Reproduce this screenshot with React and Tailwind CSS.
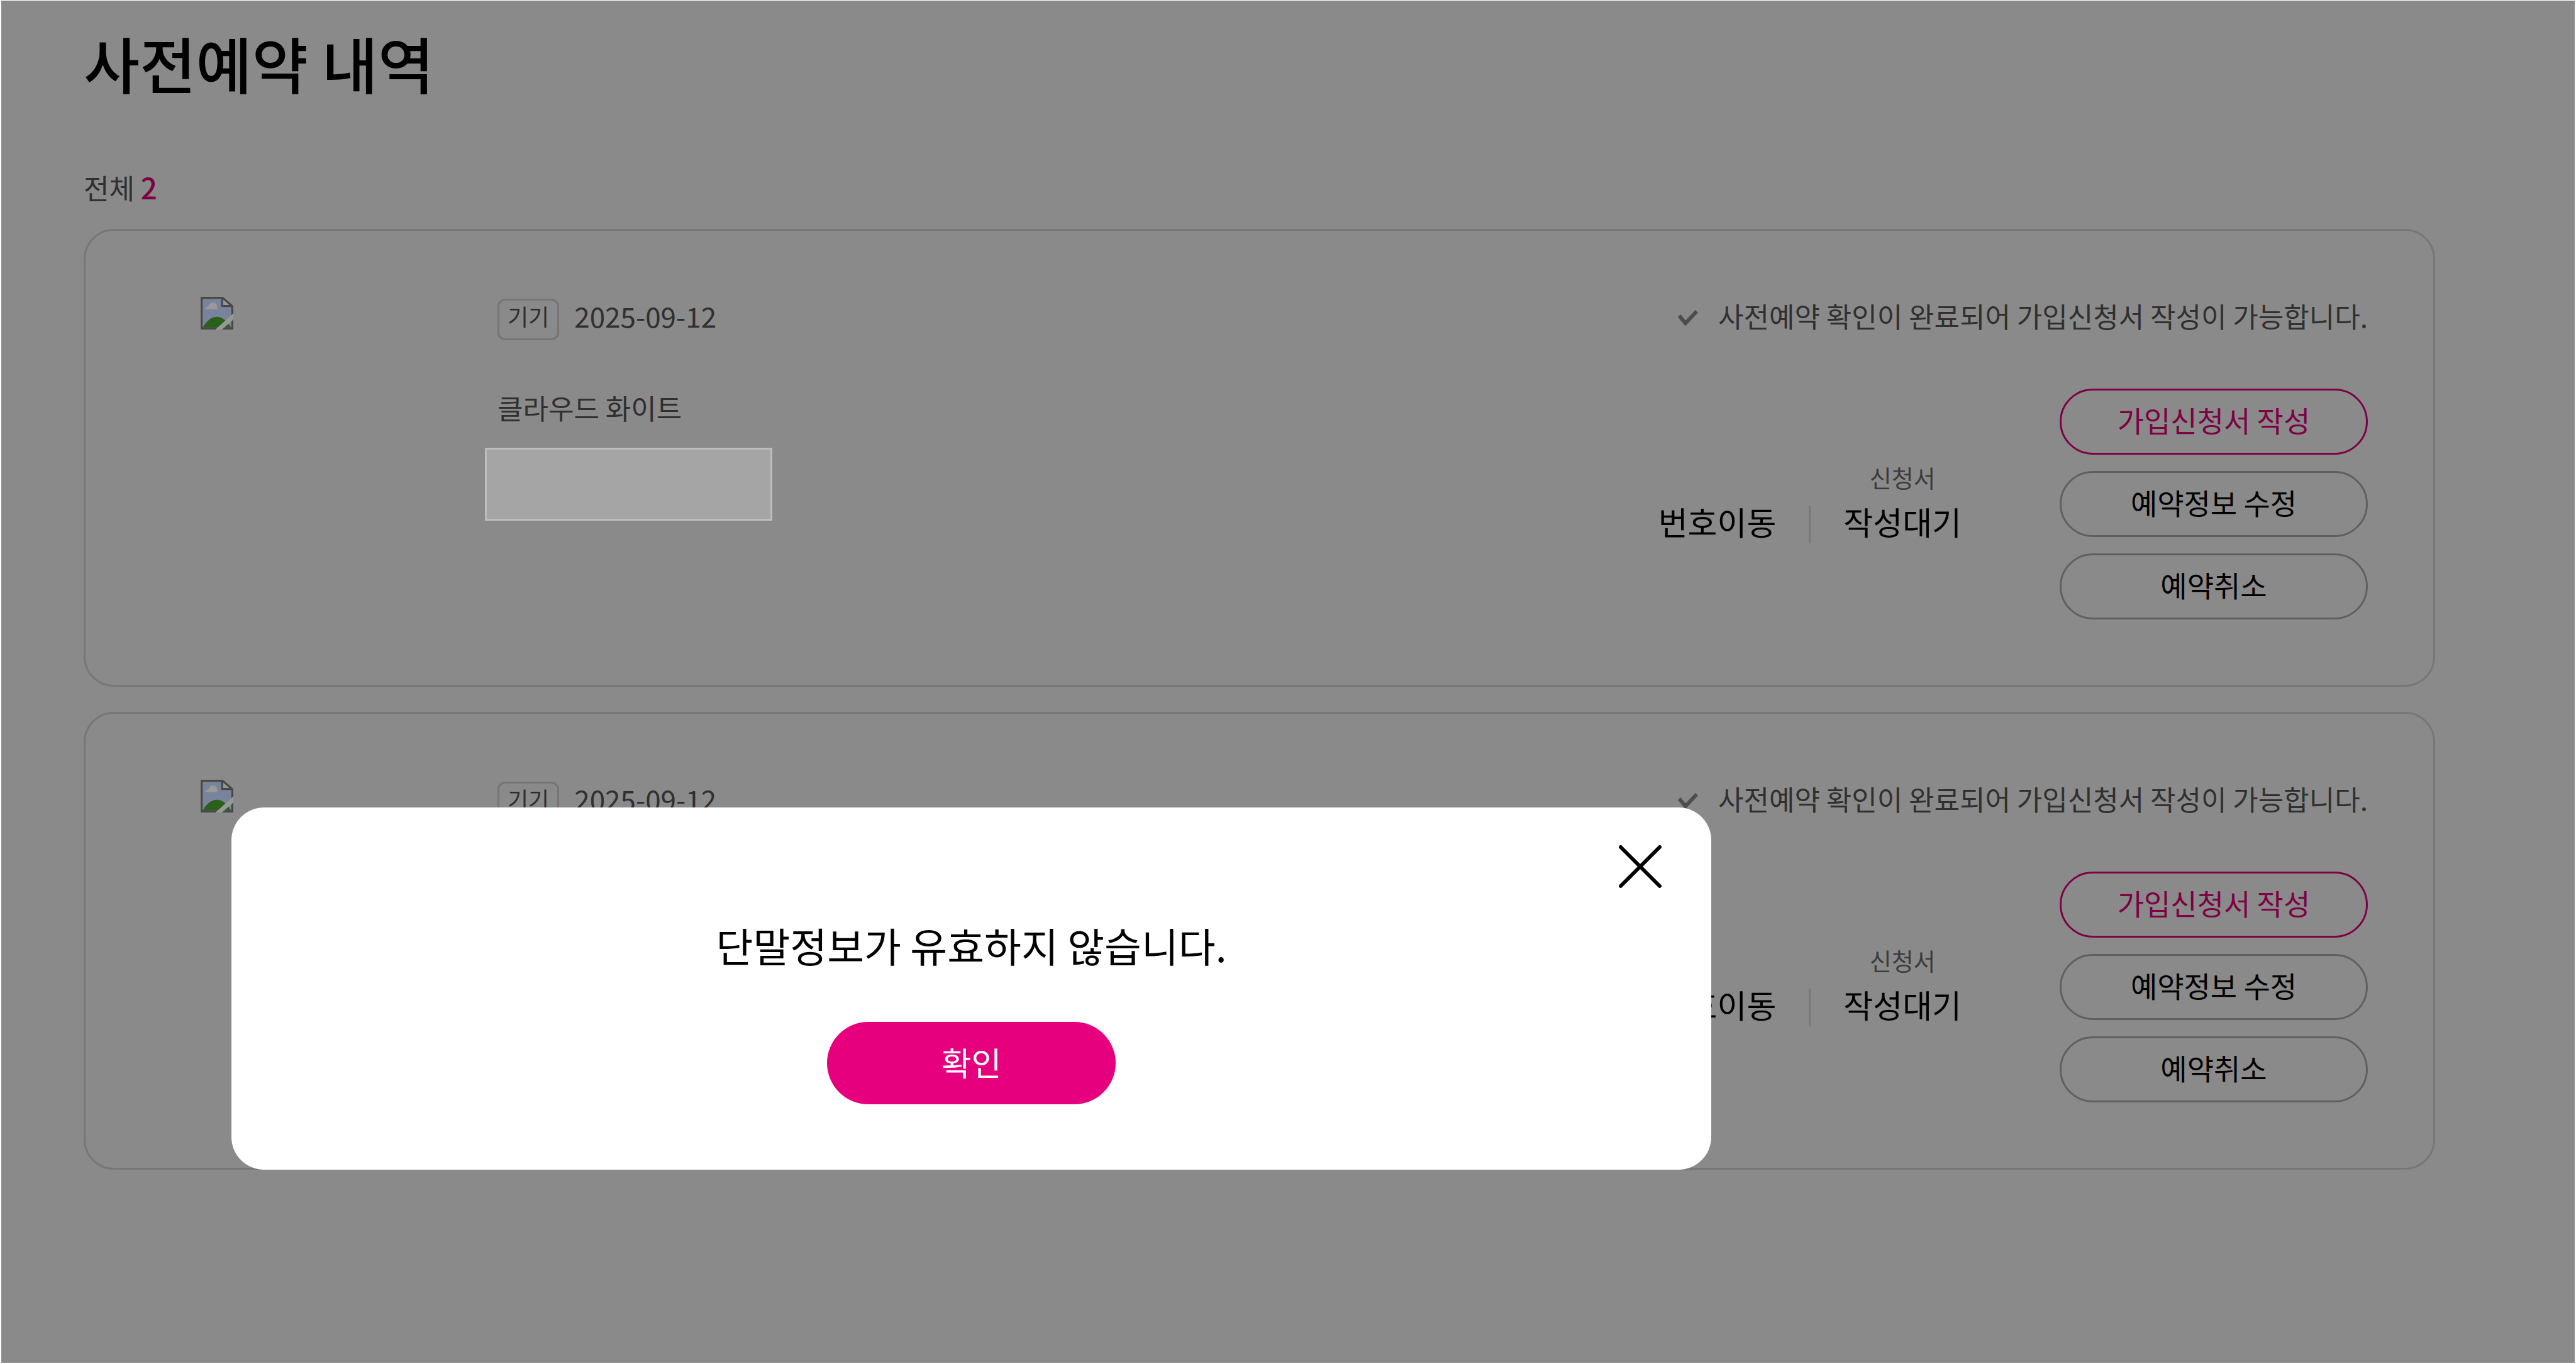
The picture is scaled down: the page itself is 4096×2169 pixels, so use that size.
function BrokenImage() {
  return (
    <svg viewBox="0 0 16 16" className="size-[52px]" role="img" aria-label="상품 이미지">
      <path d="M1 1H10.5V4.5H15V15H1Z" fill="#78849b" />
      <path d="M2 6C2.3 5.2 3.2 4.9 3.8 4.6C4.3 3.4 5 2.8 6 2.8C7 2.8 7.9 3.6 8.1 4.6V6Z" fill="#9c9a98" />
      <path d="M1 15C3 11.8 5.2 9.8 8 9.8C10.5 9.8 12.6 11.6 14.9 15Z" fill="#2b6018" />
      <path d="M10.5 .5L15.5 4.5H10.5Z" fill="#969696" />
      <path d="M.5 .5H10.8L15.5 4.6V15.5H.5ZM10.5 .8V4.5H15.4" fill="none" stroke="#484848" />
      <path d="M16.2 8L7 16.2H10.2L16.2 11Z" fill="#989898" />
    </svg>
  );
}

function CheckMark() {
  return (
    <svg viewBox="0 0 32 26" className="mt-2 h-[26px] w-8" fill="none" aria-hidden="true">
      <path d="M2 9L12 21L30 2" stroke="#4d4d4d" strokeWidth="6" />
    </svg>
  );
}

const actions = [
  { label: "가입신청서 작성", tone: "border-[#7e0045] text-[#7e0045]" },
  { label: "예약정보 수정", tone: "border-[#606060] text-black" },
  { label: "예약취소", tone: "border-[#606060] text-black" },
];

function ReservationCard({ date, product }) {
  return (
    <li className="flex h-[728px] rounded-[48px] border-[3px] border-[#777777] pt-[105px] pr-[104px] pl-[183px]">
      <div className="w-[472px] shrink-0">
        <BrokenImage />
      </div>
      <div className="flex-1">
        <div className="flex h-[72px] items-center gap-6">
          <span className="flex h-[66px] items-center rounded-[12px] border-[3px] border-[#757575] px-[13px] text-[36px] leading-none text-[#2e2e2e]">
            <span className="-mt-3">기기</span>
          </span>
          <time className="-mt-3 text-[44px] leading-[60px] text-[#303030]">{date}</time>
        </div>
        <p className="mt-[72px] text-[44px] leading-[64px] text-[#303030]">{product}</p>
        <div className="mt-8 -ml-5 h-[116px] w-[457px] border-[3px] border-[#bdbdbd] bg-[#a5a5a5]" />
      </div>
      <div className="flex flex-col items-end">
        <p className="flex items-center gap-8 text-[44px] leading-[60px] text-[#303030]">
          <CheckMark />
          사전예약 확인이 완료되어 가입신청서 작성이 가능합니다.
        </p>
        <div className="mt-[86px] flex items-center">
          <dl className="flex items-end pb-4 text-[51px] leading-[70px] text-black">
            <div>
              <dt className="sr-only">가입유형</dt>
              <dd>번호이동</dd>
            </div>
            <div className="mx-[52px] h-[60px] w-[3px] bg-[#777777]" />
            <div className="flex flex-col items-center">
              <dt className="text-[38px] leading-[70px] text-[#3c3c3c]">신청서</dt>
              <dd>작성대기</dd>
            </div>
          </dl>
          <div className="ml-[156px] flex w-[490px] flex-col gap-[26px]">
            {actions.map((action) => (
              <button
                key={action.label}
                type="button"
                className={`h-[105px] rounded-full border-[3px] pb-2 text-[46px] leading-none ${action.tone}`}
              >
                {action.label}
              </button>
            ))}
          </div>
        </div>
      </div>
    </li>
  );
}

function AlertDialog() {
  return (
    <div
      role="alertdialog"
      aria-modal="true"
      aria-labelledby="alert-message"
      className="absolute top-[1284px] left-[368px] flex h-[576px] w-[2353px] flex-col items-center rounded-[52px] bg-white pt-[172px]"
    >
      <button type="button" aria-label="닫기" className="absolute top-[59px] right-[78px]">
        <svg viewBox="0 0 70 70" className="size-[70px]" fill="none" stroke="#000" strokeWidth="6" strokeLinecap="round">
          <path d="M4 4L66 66M66 4L4 66" />
        </svg>
      </button>
      <p id="alert-message" className="text-[64px] leading-[92px] text-black">
        단말정보가 유효하지 않습니다.
      </p>
      <button type="button" className="mt-[77px] h-[131px] w-[459px] rounded-full bg-[#e6007e] pb-1 text-[52px] leading-none text-white">
        확인
      </button>
    </div>
  );
}

export default function App() {
  return (
    <div className="relative min-h-screen bg-white px-[2px] pt-px pb-[2px] font-['Noto_Sans_CJK_KR',sans-serif]">
      <main className="min-h-[2166px] bg-[#8a8a8a] pt-7 pr-[222px] pl-[131px]">
        <h1 className="text-[97px] leading-[140px] font-medium text-black">사전예약 내역</h1>
        <p className="mt-[96px] text-[44px] leading-[64px] text-[#303030]">
          전체 <strong className="text-[46px] font-medium text-[#7e0045]">2</strong>
        </p>
        <ul className="mt-[34px] flex flex-col gap-10">
          <ReservationCard date="2025-09-12" product="클라우드 화이트" />
          <ReservationCard date="2025-09-12" product="클라우드 화이트" />
        </ul>
      </main>
      <AlertDialog />
    </div>
  );
}
